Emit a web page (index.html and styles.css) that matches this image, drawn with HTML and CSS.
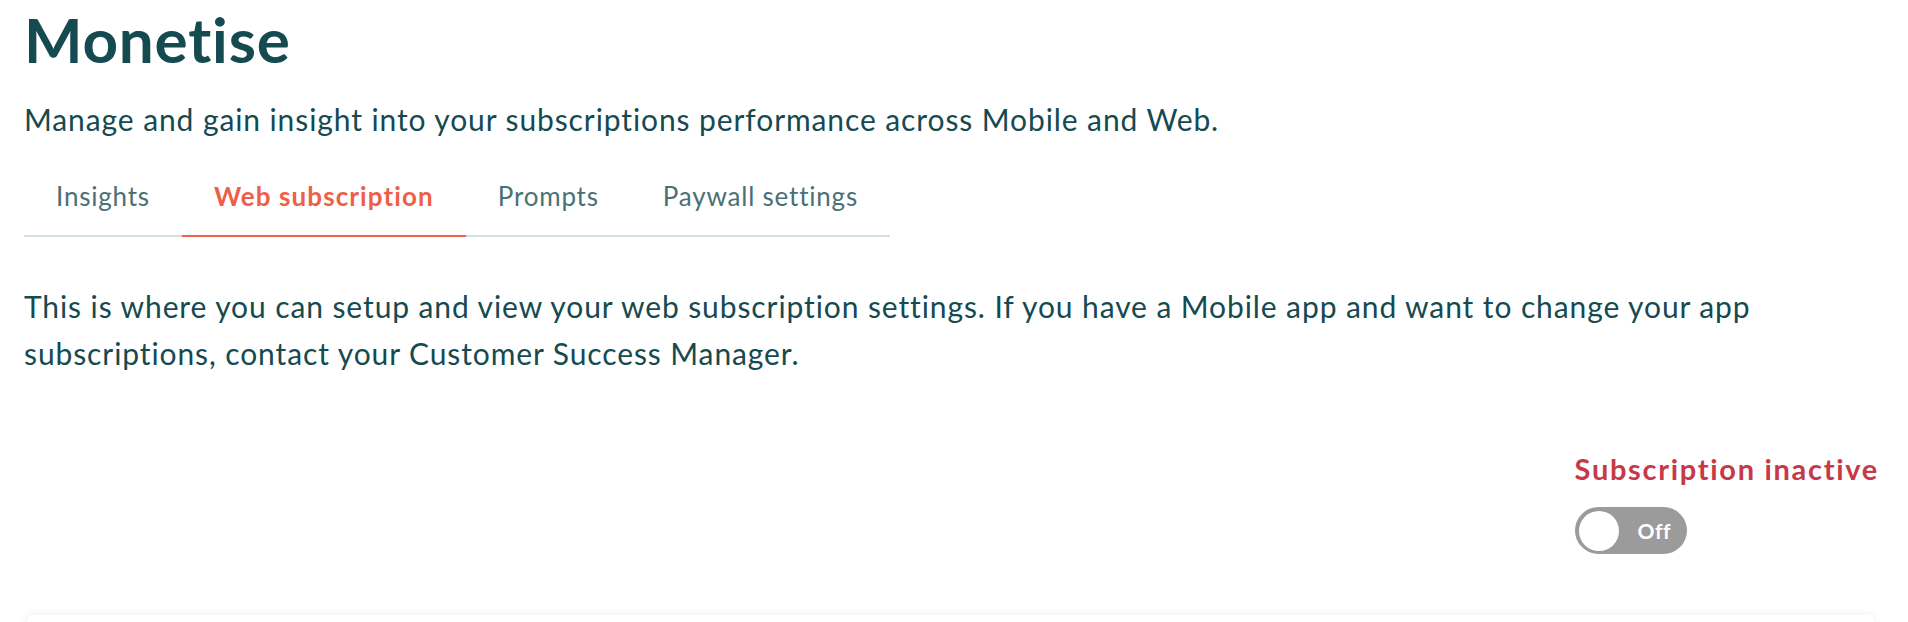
FILE: index.html
```html
<!DOCTYPE html>
<html lang="en">
<head>
<meta charset="utf-8">
<title>Monetise</title>
<link rel="stylesheet" href="styles.css">
</head>
<body>
<main class="page">
  <h1 class="title">Monetise</h1>
  <p class="subtitle">Manage and gain insight into your subscriptions performance across Mobile and Web.</p>
  <nav class="tabs">
    <a class="tab">Insights</a>
    <a class="tab active">Web subscription</a>
    <a class="tab">Prompts</a>
    <a class="tab">Paywall settings</a>
  </nav>
  <p class="intro">This is where you can setup and view your web subscription settings. If you have a Mobile app and want to change your app subscriptions, contact your Customer Success Manager.</p>
  <div class="status-row">
    <div class="status">
      <div class="status-label">Subscription inactive</div>
      <div class="toggle">
        <span class="knob"></span>
        <span class="toggle-text">Off</span>
      </div>
    </div>
  </div>
  <div class="card"></div>
</main>
</body>
</html>
```
FILE: styles.css
```css
html, body {
  margin: 0;
  height: 100%;
  background: #ffffff;
  overflow: hidden;
}
body {
  font-family: "Lato", "Open Sans", sans-serif;
  color: #154a51;
}
.page {
  padding: 0 24px;
  display: flex;
  flex-direction: column;
  height: 100%;
  box-sizing: border-box;
  overflow: hidden;
}
.title {
  margin: 0;
  padding-top: 3px;
  font-size: 62px;
  line-height: 72px;
  font-weight: 700;
  letter-spacing: 0.8px;
  color: #154a51;
}
.subtitle {
  margin: 24px 0 0;
  font-size: 30px;
  line-height: 40px;
  letter-spacing: 0.9px;
  color: #154a51;
}
.tabs {
  display: flex;
  width: 866px;
  margin-top: 34px;
  border-bottom: 2px solid #d3dfe1;
}
.tab {
  padding: 8px 32px 24px;
  font-size: 26px;
  line-height: 30px;
  letter-spacing: 0.8px;
  color: #4a7075;
  margin-bottom: -2px;
  border-bottom: 2px solid transparent;
}
.tab.active {
  color: #ee5f48;
  font-weight: 700;
  letter-spacing: 1.1px;
  border-bottom-color: #ee5f48;
}
.intro {
  margin: 46px 0 0;
  font-size: 30px;
  line-height: 47px;
  letter-spacing: 0.9px;
  color: #154a51;
}
.status-row {
  display: flex;
  justify-content: flex-end;
  margin-top: 75px;
  padding-right: 5px;
}
.status {
  display: flex;
  flex-direction: column;
  align-items: flex-start;
  gap: 21px;
}
.status-label {
  font-size: 29px;
  line-height: 34px;
  font-weight: 700;
  letter-spacing: 1.7px;
  color: #c73947;
}
.toggle {
  width: 112px;
  height: 47px;
  border-radius: 24px;
  background: #9b9b9b;
  display: flex;
  align-items: center;
  padding: 0 4px;
  box-sizing: border-box;
  gap: 19px;
}
.knob {
  width: 40px;
  height: 40px;
  border-radius: 50%;
  background: #ffffff;
  flex: none;
}
.toggle-text {
  color: #ffffff;
  font-weight: 700;
  font-size: 21px;
  line-height: 24px;
  letter-spacing: 0.5px;
}
.card {
  flex: none;
  margin: 61px 10px 0 3px;
  height: 40px;
  border-radius: 6px;
  background: #ffffff;
  box-shadow: 0 0 8px rgba(0, 0, 0, 0.08);
}
```
